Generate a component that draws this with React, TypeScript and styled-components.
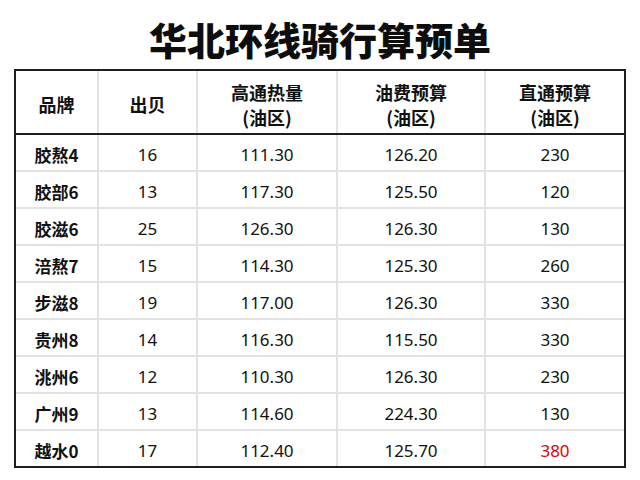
import React from "react";
import styled, { createGlobalStyle } from "styled-components";

const GlobalStyle = createGlobalStyle`
  html, body {
    margin: 0;
    padding: 0;
    background: #ffffff;
  }
  body {
    font-family: "Noto Sans", "Noto Sans CJK SC", sans-serif;
    color: #111111;
  }
`;

const Page = styled.div`
  width: 640px;
  height: 480px;
  padding: 0 14px;
  box-sizing: border-box;
  display: flex;
  flex-direction: column;
`;

const Title = styled.h1`
  margin: 0;
  padding-top: 18px;
  height: 51px;
  line-height: 42px;
  text-align: center;
  font-family: "Noto Sans CJK SC", sans-serif;
  font-size: 38px;
  font-weight: 900;
  color: #0d0d0d;
`;

const Table = styled.div`
  border: 2px solid #1e1e1e;
  display: flex;
  flex-direction: column;
`;

const Row = styled.div<{ $head?: boolean; $last?: boolean }>`
  display: grid;
  grid-template-columns: 83px 99px 140px 148px 138px;
  height: ${({ $head }) => ($head ? "62px" : "35px")};
  border-bottom: ${({ $head, $last }) =>
    $last ? "none" : $head ? "2px solid #1e1e1e" : "2px solid #e3e3e3"};
`;

const Cell = styled.div<{ $bold?: boolean; $red?: boolean }>`
  display: flex;
  flex-direction: column;
  align-items: center;
  justify-content: center;
  padding-top: 4px;
  box-sizing: border-box;
  border-right: 2px solid #e3e3e3;
  font-family: ${({ $bold }) =>
    $bold ? '"Noto Sans CJK SC", sans-serif' : '"Noto Sans", "Noto Sans CJK SC", sans-serif'};
  font-size: 17px;
  font-weight: ${({ $bold }) => ($bold ? 700 : 400)};
  color: ${({ $red }) => ($red ? "#e30000" : "#111111")};
  &:last-child {
    border-right: none;
  }
`;

const HeadCell = styled(Cell)`
  padding-top: 5px;
  font-family: "Noto Sans CJK SC", sans-serif;
  font-size: 18px;
  font-weight: 700;
  line-height: 25px;
`;

const heads: string[][] = [
  ["品牌"],
  ["出贝"],
  ["高通热量", "(油区)"],
  ["油费预算", "(油区)"],
  ["直通预算", "(油区)"],
];

const rows: string[][] = [
  ["胶熬4", "16", "111.30", "126.20", "230"],
  ["胶部6", "13", "117.30", "125.50", "120"],
  ["胶滋6", "25", "126.30", "126.30", "130"],
  ["涪熬7", "15", "114.30", "125.30", "260"],
  ["步滋8", "19", "117.00", "126.30", "330"],
  ["贵州8", "14", "116.30", "115.50", "330"],
  ["洮州6", "12", "110.30", "126.30", "230"],
  ["广州9", "13", "114.60", "224.30", "130"],
  ["越水0", "17", "112.40", "125.70", "380"],
];

export default function App() {
  return (
    <>
      <GlobalStyle />
      <Page>
        <Title>华北环线骑行算预单</Title>
        <Table>
          <Row $head>
            {heads.map((h, i) => (
              <HeadCell key={i}>
                {h.map((line, j) => (
                  <span key={j}>{line}</span>
                ))}
              </HeadCell>
            ))}
          </Row>
          {rows.map((r, i) => (
            <Row key={i} $last={i === rows.length - 1}>
              {r.map((v, j) => (
                <Cell
                  key={j}
                  $bold={j === 0}
                  $red={i === rows.length - 1 && j === 4}
                >
                  {v}
                </Cell>
              ))}
            </Row>
          ))}
        </Table>
      </Page>
    </>
  );
}
